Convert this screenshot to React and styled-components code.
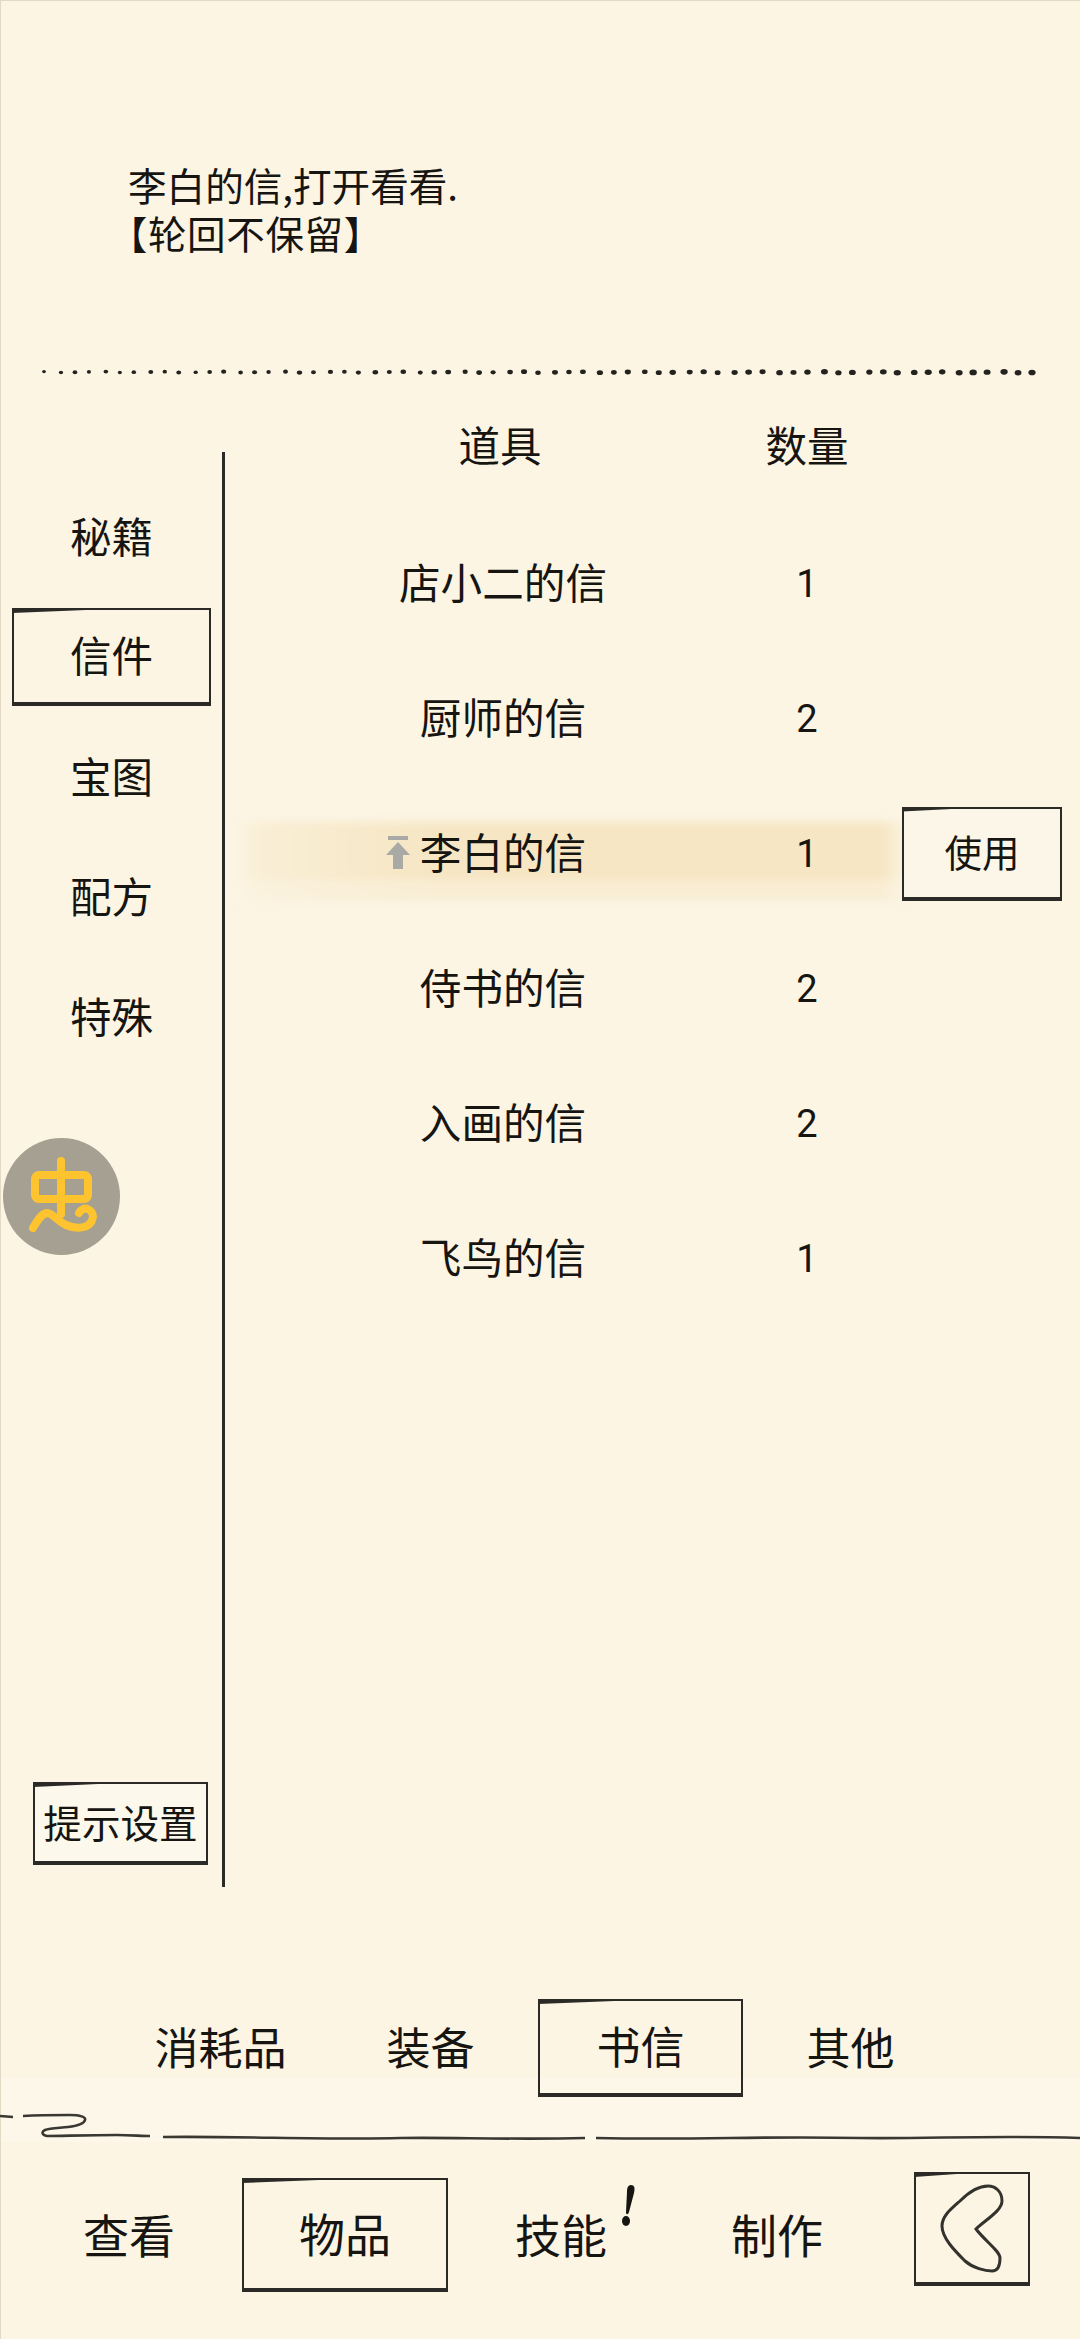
import React from "react";
import styled, { createGlobalStyle, css } from "styled-components";

const GlobalStyle = createGlobalStyle`
  html, body {
    margin: 0;
    padding: 0;
    background: #fcf5e4;
  }
  * { box-sizing: border-box; }
`;

// hand drawn frame: thin sides, heavy bottom, brush stroke along the top left
const sketchBox = css`
  position: relative;
  border: 2px solid #2b2a26;
  border-bottom-width: 4px;
  &::before {
    content: "";
    position: absolute;
    top: -2px;
    left: -2px;
    width: 38%;
    height: 5px;
    background: #2b2a26;
    clip-path: polygon(0 0, 100% 0, 100% 40%, 0 100%);
  }
`;

const Page = styled.div`
  position: relative;
  width: 1080px;
  height: 2339px;
  display: flex;
  flex-direction: column;
  overflow: hidden;
  color: #161512;
  font-family: "Noto Sans CJK SC", "Noto Sans", sans-serif;
  background: linear-gradient(
    to bottom,
    transparent 2078px,
    #fdf7ea 2078px,
    #fdf7ea 2142px,
    transparent 2142px
  );
  background-color: #fcf5e4;
  box-shadow: inset 1px 1px 0 #e2dac4;
`;

const Description = styled.div`
  height: 368px;
  padding: 160px 0 0 128px;
  font-size: 38.6px;
  line-height: 48px;
`;

const Tight = styled.span`
  font-feature-settings: "halt";
  letter-spacing: 0.6px;
`;

const DotLine = styled.svg`
  display: block;
  flex: none;
  width: 1080px;
  height: 8px;
`;

const Main = styled.div`
  display: flex;
  flex: none;
  height: 1490px;
  margin-top: 24px;
`;

const Sidebar = styled.div`
  display: flex;
  flex-direction: column;
  flex: none;
  gap: 22px;
  width: 225px;
  height: 1435px;
  margin-top: 52px;
  padding: 36px 0 22px;
  border-right: 3px solid #2b2a26;
`;

const SideItem = styled.div`
  display: flex;
  align-items: center;
  justify-content: center;
  flex: none;
  width: 199px;
  height: 98px;
  margin-left: 12px;
  padding-bottom: 5px;
  font-size: 41.5px;
  ${(p) => p.$active && sketchBox}
`;

const HintButton = styled.div`
  ${sketchBox}
  display: flex;
  align-items: center;
  justify-content: center;
  flex: none;
  width: 175px;
  height: 83px;
  margin: auto 0 0 33px;
  padding-bottom: 4px;
  font-size: 38.6px;
  background: #fdf8ec;
`;

const Table = styled.div`
  flex: 1;
`;

const HeadRow = styled.div`
  display: grid;
  grid-template-columns: 550px 64px;
  align-items: center;
  height: 90px;
  margin-bottom: 26px;
  padding-bottom: 3px;
  font-size: 41.5px;
  text-align: center;
`;

const HeadQty = styled.div`
  display: flex;
  justify-content: center;
  white-space: nowrap;
`;

const Row = styled.div`
  position: relative;
  display: grid;
  grid-template-columns: 550px 64px 1fr;
  align-items: center;
  height: 135px;
  font-size: 41.6px;
  text-align: center;
  ${(p) =>
    p.$selected &&
    css`
      &::before {
        content: "";
        position: absolute;
        left: 8px;
        top: 34px;
        width: 676px;
        height: 86px;
        filter: blur(3px);
        background: linear-gradient(
            to right,
            rgba(252, 245, 228, 1) 0%,
            rgba(252, 245, 228, 0.55) 4%,
            rgba(252, 245, 228, 0.15) 22%,
            rgba(252, 245, 228, 0) 30%,
            rgba(252, 245, 228, 0) 96%,
            rgba(252, 245, 228, 1) 100%
          ),
          linear-gradient(
            to bottom,
            #f9eed6 0%,
            #f6e6c4 8%,
            #f6e6c4 66%,
            #f9edd2 72%,
            #f9eed6 90%,
            #fcf5e4 100%
          );
      }
    `}
`;

const NameCell = styled.div`
  position: relative;
  padding: 0 0 5px 6px;
`;

const Name = styled.span`
  position: relative;
`;

const PinIcon = styled.svg`
  position: absolute;
  left: -34px;
  top: 15px;
  width: 24px;
  height: 33px;
`;

const Qty = styled.div`
  position: relative;
  font-family: Roboto, "Noto Sans", sans-serif;
  font-size: 38px;
`;

const UseButton = styled.div`
  ${sketchBox}
  display: flex;
  align-items: center;
  justify-content: center;
  width: 160px;
  height: 94px;
  margin-left: 63px;
  padding-bottom: 4px;
  font-size: 37.5px;
  background: #fcf6e8;
`;

const TabBar = styled.div`
  display: flex;
  flex: none;
  gap: 5px;
  height: 98px;
  margin-top: 109px;
  padding-left: 118px;
`;

const Tab = styled.div`
  display: flex;
  align-items: center;
  justify-content: center;
  flex: none;
  width: 205px;
  padding-bottom: 5px;
  font-size: 44px;
  ${(p) => p.$active && sketchBox}
`;

const Ground = styled.svg`
  display: block;
  flex: none;
  width: 1080px;
  height: 35px;
  margin-top: 13px;
`;

const Nav = styled.div`
  display: flex;
  flex: none;
  gap: 10px;
  margin-top: 27px;
  padding-left: 26px;
`;

const NavItem = styled.div`
  position: relative;
  display: flex;
  align-items: center;
  justify-content: center;
  flex: none;
  width: 206px;
  height: 114px;
  margin-top: 6px;
  padding-bottom: 5px;
  font-size: 46px;
  ${(p) => p.$active && sketchBox}
`;

const Alert = styled.svg`
  position: absolute;
  left: 161px;
  top: 6px;
  width: 18px;
  height: 44px;
`;

const BackButton = styled.div`
  ${sketchBox}
  flex: none;
  width: 116px;
  height: 114px;
  margin-left: 24px;
`;

const BackIcon = styled.svg`
  display: block;
  width: 112px;
  height: 108px;
`;

const Bug = styled.svg`
  position: absolute;
  left: 3px;
  top: 1138px;
  width: 117px;
  height: 117px;
`;

const rows = [
  { name: "店小二的信", qty: 1 },
  { name: "厨师的信", qty: 2 },
  { name: "李白的信", qty: 1, selected: true },
  { name: "侍书的信", qty: 2 },
  { name: "入画的信", qty: 2 },
  { name: "飞鸟的信", qty: 1 },
];

const sideItems = ["秘籍", "信件", "宝图", "配方", "特殊"];
const tabs = ["消耗品", "装备", "书信", "其他"];
const navItems = ["查看", "物品", "技能", "制作"];

// the dots get fatter towards the right, with a bit of hand wobble
const dots = Array.from({ length: 67 }, (_, i) => ({
  x: 45 + i * 14.97 + ((i * 5) % 3) - 1,
  y: 3.6 + ((i * 3) % 4) * 0.3 + i * 0.004,
  rx: 1.9 + (i / 66) * 1.5 + ((i * 7) % 5) * 0.1,
  ry: 1.7 + (i / 66) * 1 + ((i * 7) % 5) * 0.05,
}));

export default function App() {
  return (
    <Page>
      <GlobalStyle />
      <Description>
        李白的信,打开看看.
        <br />
        <Tight>【轮回不保留】</Tight>
      </Description>
      <DotLine viewBox="0 0 1080 8">
        {dots.map((d) => (
          <ellipse key={d.x} cx={d.x} cy={d.y} rx={d.rx} ry={d.ry} fill="#23221e" />
        ))}
      </DotLine>

      <Main>
        <Sidebar>
          {sideItems.map((s) => (
            <SideItem key={s} $active={s === "信件"}>
              {s}
            </SideItem>
          ))}
          <HintButton>提示设置</HintButton>
        </Sidebar>

        <Table>
          <HeadRow>
            <div>道具</div>
            <HeadQty>数量</HeadQty>
          </HeadRow>
          {rows.map((r) => (
            <Row key={r.name} $selected={r.selected}>
              <NameCell>
                <Name>
                  {r.selected && (
                    <PinIcon viewBox="0 0 24 33">
                      <rect x="2" y="0" width="20" height="4" fill="#a9a9a5" />
                      <polygon points="12,6 24,19 17,19 17,33 7,33 7,19 0,19" fill="#a9a9a5" />
                    </PinIcon>
                  )}
                  {r.name}
                </Name>
              </NameCell>
              <Qty>{r.qty}</Qty>
              {r.selected && <UseButton>使用</UseButton>}
            </Row>
          ))}
        </Table>
      </Main>

      <TabBar>
        {tabs.map((t) => (
          <Tab key={t} $active={t === "书信"}>
            {t}
          </Tab>
        ))}
      </TabBar>

      <Ground viewBox="0 0 1080 35">
        <path
          d="M0 6L13 7M23 6C40 5 58 5 70 5C80 5 86 7 85 10C84 14 76 16 68 17C60 18 50 18 45 20C41 22 42 25 47 26C60 26 90 25 117 25C130 25 142 26 150 26M163 27C240 26 330 30 400 28C450 27 510 30 585 28M596 28C700 30 760 26 860 28C930 29 990 25 1080 28"
          fill="none"
          stroke="#3a3833"
          strokeWidth="2.6"
        />
      </Ground>

      <Nav>
        {navItems.map((n) => (
          <NavItem key={n} $active={n === "物品"}>
            {n}
            {n === "技能" && (
              <Alert viewBox="0 0 18 44">
                <path d="M12 1C16 1 16 5 15 9L10 28C9 31 7 31 7 28L8 8C8 4 9 1 12 1Z" fill="#161512" />
                <ellipse cx="7" cy="37" rx="4" ry="5" fill="#161512" />
              </Alert>
            )}
          </NavItem>
        ))}
        <BackButton>
          <BackIcon viewBox="0 0 112 108">
            <path
              d="M60 55C69 46 86 37 86 27C86 17 79 12 72 12C61 12 51 20 44 27C35 35 26 42 26 52C26 64 39 77 49 87C57 94 69 97 76 97C82 97 84 91 84 84C84 77 69 67 60 55Z"
              fill="none"
              stroke="#33322d"
              strokeWidth="3"
            />
          </BackIcon>
        </BackButton>
      </Nav>

      <Bug viewBox="0 0 117 117">
        <circle cx="58.5" cy="58.5" r="58.5" fill="#a5a092" />
        <g fill="none" stroke="#fdc430" strokeWidth="8" strokeLinecap="round" strokeLinejoin="round">
          <rect x="32" y="37" width="53" height="24" rx="4" />
          <path d="M58 23V76" />
          <path d="M30 90C34 83 38 76 44 75C50 75 54 83 63 87C72 91 88 92 90 79C90 71 80 67 76 75" />
        </g>
      </Bug>
    </Page>
  );
}
